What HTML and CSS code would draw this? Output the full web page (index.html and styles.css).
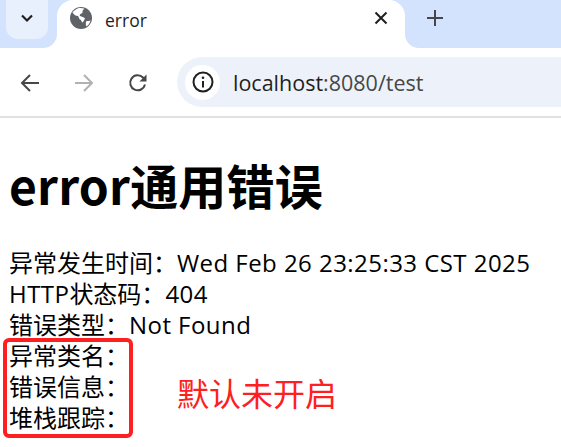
FILE: index.html
```html
<!DOCTYPE html>
<html lang="en">
<head>
  <meta charset="UTF-8" />
  <title>error</title>
  <link rel="stylesheet" href="styles.css">
</head>
<body>

  <div class="tabstrip">
    <div class="tab-search-wrap">
      <div class="tab-search">
        <svg width="16" height="16" viewBox="0 0 16 16"><path d="M3 5.5 8 10.5 13 5.5" fill="none" stroke="#1f1f1f" stroke-width="2.2"/></svg>
      </div>
    </div>
    <div class="tab">
      <svg class="favicon" width="22" height="22" viewBox="0 0 22 22">
        <circle cx="11" cy="11" r="11" fill="#5f6368"/>
        <path d="M9 1 C6 2 4 3.5 2.5 5.5 C4 8 6 9 8 9 C9 10 9 12 10 12.5 C11.5 13 11.5 15 12.5 15.5 C14 14 14.5 12.5 15 11.5 C13.5 10 12 9.5 10 9 C9 7.5 11 6.5 12.5 6 C12 4.5 13 2.5 14.5 1.8 C13 1 11 .8 9 1 Z M16.5 14 C18 14 19.5 14 20.5 13.5 C20 16 18.5 18 16.5 19.5 C15.5 18 15.5 15.5 16.5 14 Z" fill="#fff"/>
      </svg>
      <span class="tab-title">error</span>
      <svg class="tab-close" width="14" height="14" viewBox="0 0 14 14"><path d="M1.5 1.5 12.5 12.5M12.5 1.5 1.5 12.5" stroke="#1f1f1f" stroke-width="2"/></svg>
    </div>
    <div class="new-tab">
      <svg width="18" height="18" viewBox="0 0 18 18"><path d="M9 1V17M1 9H17" stroke="#474747" stroke-width="2"/></svg>
    </div>
  </div>

  <div class="toolbar">
    <svg class="nav-btn" width="20" height="20" viewBox="0 0 20 20"><path d="M19 10H2M10 2 2 10 10 18" fill="none" stroke="#474747" stroke-width="2"/></svg>
    <svg class="nav-btn" width="20" height="20" viewBox="0 0 20 20"><path d="M1 10H18M10 2 18 10 10 18" fill="none" stroke="#b1b1b1" stroke-width="2"/></svg>
    <svg class="nav-btn" width="20" height="20" viewBox="0 0 20 20"><path d="M17 11.5A7.5 7.5 0 1 1 15 4.5L17.5 7" fill="none" stroke="#474747" stroke-width="2"/><path d="M18.5 1.5V8.5H11.5Z" fill="#474747"/></svg>
    <div class="omnibox">
      <div class="site-info">
        <svg width="22" height="22" viewBox="0 0 22 22"><circle cx="11" cy="11" r="9.5" fill="none" stroke="#1f1f1f" stroke-width="2"/><path d="M11 10V16.5" stroke="#1f1f1f" stroke-width="2"/><circle cx="11" cy="6.8" r="1.3" fill="#1f1f1f"/></svg>
      </div>
      <span class="url">localhost<span class="url-rest">:8080/test</span></span>
    </div>
  </div>

  <div class="content">
    <h1>error通用错误</h1>
    <div>异常发生时间&#xFF1A;<span class="val">Wed Feb 26 23:25:33 CST 2025</span></div>
    <div><span class="val">HTTP</span>状态码&#xFF1A;<span class="val">404</span></div>
    <div>错误类型&#xFF1A;<span class="val">Not Found</span></div>
    <div>异常类名&#xFF1A;</div>
    <div>错误信息&#xFF1A;</div>
    <div>堆栈跟踪&#xFF1A;</div>
    <div class="mark-box"></div>
    <div class="mark-label">默认未开启</div>
  </div>

</body>
</html>
```

FILE: styles.css
```css
* { box-sizing: border-box; }
body {
  margin: 0;
  background: #fff;
  color: #000;
  font-family: 'Open Sans', 'Noto Sans CJK SC', sans-serif;
}

.tabstrip {
  display: flex;
  height: 48px;
  background: linear-gradient(#d3e3fd 50%, #fff 50%);
}

.tab-search-wrap {
  width: 57px;
  height: 48px;
  padding: 0 0 0 6px;
  background: #d3e3fd;
  border-bottom-right-radius: 14px;
}

.tab-search {
  width: 42px;
  height: 39px;
  padding-bottom: 3px;
  background: #e9f0fd;
  border-radius: 0 0 12px 12px;
  display: flex;
  align-items: center;
  justify-content: center;
}

.tab {
  width: 348px;
  height: 48px;
  background: #fff;
  border-radius: 16px 16px 0 0;
  display: flex;
  align-items: center;
  padding: 0 17px 8px 13px;
}

.favicon {
  flex: none;
  margin-bottom: 4px;
}

.tab-title {
  margin-left: 13px;
  font-size: 17.5px;
  color: #1f1f1f;
}

.tab-close {
  margin-left: auto;
  margin-bottom: 4px;
}

.new-tab {
  flex: 1;
  padding: 9px 0 0 21px;
  background: #d3e3fd;
  border-bottom-left-radius: 14px;
}

.toolbar {
  height: 70px;
  background: #fff;
  border-bottom: 2px solid #e1e1e1;
  display: flex;
  align-items: flex-start;
  padding: 9px 0 0 20px;
}

.nav-btn {
  margin-top: 16px;
  margin-right: 34px;
  flex: none;
}

.omnibox {
  margin-left: -5px;
  flex: 1;
  height: 50px;
  background: #edf2fa;
  border-radius: 25px 0 0 25px;
  display: flex;
  align-items: center;
  padding-left: 8px;
}

.site-info {
  width: 35px;
  height: 35px;
  border-radius: 50%;
  background: #fff;
  display: flex;
  align-items: center;
  justify-content: center;
}

.url {
  margin-left: 13px;
  font-size: 21.5px;
  color: #1f1f1f;
}

.url-rest { color: #474747; }

.content {
  position: relative;
  padding: 34px 9px 14px;
  font-size: 24px;
  line-height: 31px;
}

.val { letter-spacing: 0.45px; }

h1 {
  font-family: 'Noto Sans CJK SC', sans-serif;
  font-size: 48px;
  line-height: 64px;
  font-weight: bold;
  letter-spacing: 0.2px;
  margin: 0 0 31px;
}

.mark-box {
  position: absolute;
  left: 3px;
  top: 220px;
  width: 130px;
  height: 100px;
  border: 4px solid #fe2020;
  border-radius: 6px;
}

.mark-label {
  position: absolute;
  left: 177px;
  top: 256px;
  font-size: 32px;
  line-height: 40px;
  color: #fe2020;
}
```
